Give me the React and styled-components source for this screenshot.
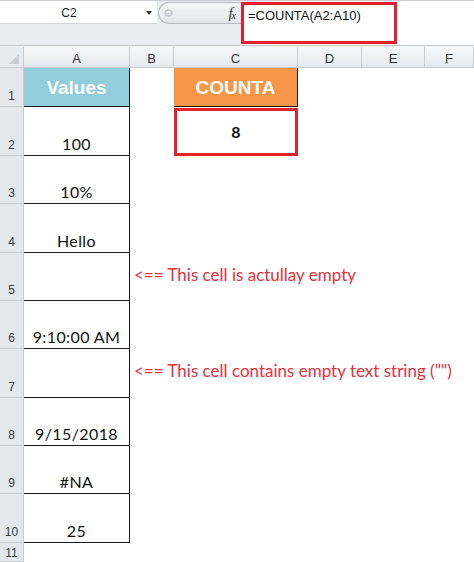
import React from 'react';
import styled, { createGlobalStyle } from 'styled-components';

const GlobalStyle = createGlobalStyle`
  html, body { margin: 0; padding: 0; background: #ffffff; }
  * { box-sizing: border-box; }
`;

const Page = styled.div`
  width: 474px;
  height: 562px;
  overflow: hidden;
  background: #ffffff;
  font-family: 'Liberation Sans', Arial, sans-serif;
`;

// formula bar -------------------------------------------------------------
const FormulaBar = styled.div`
  display: flex;
  height: 45px;
  border-top: 1px solid #c9cdd3;
  background: #e9ecf0;
`;
const NameArea = styled.div`
  width: 241px;
  display: flex;
  flex-direction: column;
`;
const NameRow = styled.div`
  display: flex;
  height: 23px;
  align-items: stretch;
`;
const NameBox = styled.div`
  width: 157px;
  background: #ffffff;
  display: flex;
  align-items: center;
  font-size: 12px;
  color: #222;
  border-bottom: 1px solid #d3d7dc;
`;
const NameText = styled.span`
  width: 138px;
  text-align: center;
  padding-top: 1px;
`;
const DropArrow = styled.span`
  width: 0;
  height: 0;
  margin-left: 8px;
  margin-top: 2px;
  border-left: 3.5px solid transparent;
  border-right: 3.5px solid transparent;
  border-top: 4px solid #333;
`;
const Pill = styled.div`
  flex: 1;
  margin: 1px 0 0 1px;
  border: 1px solid #b7bcc4;
  border-right: none;
  border-radius: 11px 0 0 11px;
  background: linear-gradient(#f4f6f8, #e3e7ec);
  display: flex;
  align-items: center;
  justify-content: space-between;
  padding: 0 6px 0 5px;
`;
const FxLabel = styled.span`
  font-family: 'Liberation Serif', 'Times New Roman', serif;
  font-style: italic;
  font-size: 15px;
  color: #333;
  letter-spacing: -1px;
  sub {
    font-size: 10px;
    vertical-align: -1px;
  }
`;
const FormulaInput = styled.div`
  flex: 1;
  background: #ffffff;
  padding-top: 1px;
`;
const FormulaBox = styled.div`
  width: 156px;
  height: 42px;
  border: 3px solid #e0202e;
  padding: 3px 0 0 4px;
  font-size: 13px;
  line-height: 16px;
  color: #111;
`;
const Band = styled.div`
  height: 2px;
  background: #f4f5f7;
  border-top: 1px solid #c3c8cf;
`;

// sheet ---------------------------------------------------------------------
const Sheet = styled.div`
  display: grid;
  grid-template-columns: 24px 106px 44px 124px 64px 63px 49px;
  grid-template-rows: 21px 39px 49px 48px 49px 48px 48px 49px 48px 48px 49px 19px;
`;
const Corner = styled.div`
  position: relative;
  background: #e6e9ee;
  border-right: 1px solid #c6cbd2;
  border-bottom: 1px solid #c6cbd2;
  &::after {
    content: '';
    position: absolute;
    right: 4px;
    bottom: 3px;
    border-left: 10px solid transparent;
    border-bottom: 10px solid #c9ced5;
  }
`;
const ColHead = styled.div`
  display: flex;
  align-items: center;
  justify-content: center;
  padding-top: 3px;
  background: linear-gradient(#f7f8fa, #e4e8ed);
  border-right: 1px solid #c6cbd2;
  border-bottom: 1px solid #c6cbd2;
  font-size: 13px;
  color: #333;
`;
const RowHead = styled.div`
  display: flex;
  align-items: flex-end;
  justify-content: center;
  padding-bottom: ${(p) => (p.$short ? '1px' : '3px')};
  background: #e4e8ed;
  border-right: 1px solid #c6cbd2;
  border-bottom: 1px solid #c6cbd2;
  font-size: 12px;
  color: #3a3a3a;
`;
const Cell = styled.div`
  display: flex;
  justify-content: center;
  align-items: ${(p) => (p.$title || p.$red ? 'center' : 'flex-end')};
  padding-top: ${(p) => (p.$title ? '2px' : '0')};
  padding-bottom: ${(p) => (p.$title || p.$red ? '0' : '2px')};
  background: ${(p) => p.$fill || '#ffffff'};
  border-right: ${(p) => (p.$boxed ? '1px solid #1a1a1a' : 'none')};
  border-bottom: ${(p) => (p.$boxed ? '1px solid #1a1a1a' : 'none')};
  ${(p) => p.$red && 'border: 3px solid #e3222f; margin-top: 1px;'}
  font-family: ${(p) => (p.$title ? "'Liberation Sans', Arial, sans-serif" : "Lato, 'Liberation Sans', sans-serif")};
  font-size: ${(p) => (p.$title ? '19px' : '16px')};
  font-weight: ${(p) => (p.$title || p.$red ? 'bold' : 'normal')};
  letter-spacing: ${(p) => (p.$title ? '0' : '0.4px')};
  line-height: 18px;
  color: ${(p) => (p.$title ? '#ffffff' : '#111111')};
`;
const Note = styled.div`
  grid-column: 3 / span 5;
  padding: 12px 0 0 4px;
  font-family: Lato, 'Liberation Sans', sans-serif;
  font-size: 17px;
  line-height: 20px;
  color: #e4323c;
  white-space: nowrap;
`;

const values = ['100', '10%', 'Hello', '', '9:10:00 AM', '', '9/15/2018', '#NA', '25'];
const notes = {
  5: '<== This cell is actullay empty',
  7: '<== This cell contains empty text string ("")',
};

export default function App() {
  return (
    <Page>
      <GlobalStyle />
      <FormulaBar>
        <NameArea>
          <NameRow>
            <NameBox>
              <NameText>C2</NameText>
              <DropArrow />
            </NameBox>
            <Pill>
              <svg width="9" height="8" viewBox="0 0 9 8">
                <ellipse cx="4.5" cy="4" rx="3.8" ry="3.2" fill="#d5d9df" stroke="#b5bac2" strokeWidth="0.8" />
                <ellipse cx="4.5" cy="3" rx="2" ry="1" fill="#f2f4f6" />
              </svg>
              <FxLabel>
                f<sub>x</sub>
              </FxLabel>
            </Pill>
          </NameRow>
        </NameArea>
        <FormulaInput>
          <FormulaBox>=COUNTA(A2:A10)</FormulaBox>
        </FormulaInput>
      </FormulaBar>
      <Band />
      <Sheet>
        <Corner />
        {['A', 'B', 'C', 'D', 'E', 'F'].map((c) => (
          <ColHead key={c}>{c}</ColHead>
        ))}

        <RowHead>1</RowHead>
        <Cell $title $boxed $fill="#92cddc">Values</Cell>
        <Cell />
        <Cell $title $boxed $fill="#f79646">COUNTA</Cell>
        <Cell />
        <Cell />
        <Cell />

        {values.map((v, i) => {
          const row = i + 2;
          return (
            <React.Fragment key={row}>
              <RowHead>{row}</RowHead>
              <Cell $boxed>{v}</Cell>
              {row === 2 ? (
                <>
                  <Cell />
                  <Cell $red>8</Cell>
                  <Cell />
                  <Cell />
                  <Cell />
                </>
              ) : notes[row] ? (
                <Note>{notes[row]}</Note>
              ) : (
                <>
                  <Cell />
                  <Cell />
                  <Cell />
                  <Cell />
                  <Cell />
                </>
              )}
            </React.Fragment>
          );
        })}

        <RowHead $short>11</RowHead>
        <Cell />
        <Cell />
        <Cell />
        <Cell />
        <Cell />
        <Cell />
      </Sheet>
    </Page>
  );
}
